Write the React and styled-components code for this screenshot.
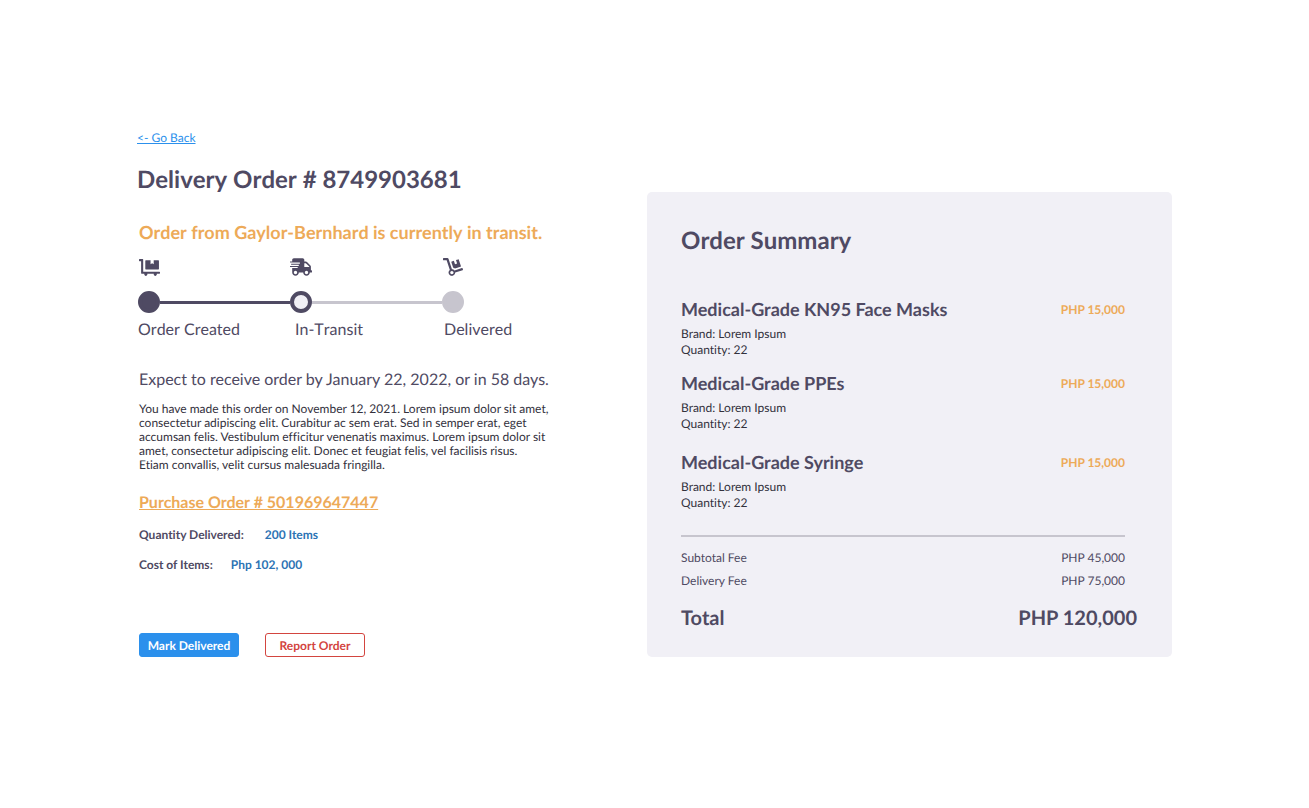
import React, { Fragment } from "react";
import styled, { createGlobalStyle } from "styled-components";
import { FaDolly, FaDollyFlatbed, FaShippingFast } from "react-icons/fa";

const ink = "#4f4a63";
const text = "#33313d";
const amber = "#edaa58";
const blue = "#2b90ec";
const deepBlue = "#2c73b4";
const red = "#d3453f";
const muted = "#c7c5ce";
const panel = "#f1f0f6";

const GlobalStyle = createGlobalStyle`
  *, *::before, *::after { box-sizing: border-box; }
  body {
    margin: 0;
    background: #fff;
    color: ${ink};
    font-family: Lato, "Liberation Sans", sans-serif;
    font-size: 12px;
    line-height: 16px;
    font-variant-ligatures: none;
    text-rendering: geometricPrecision;
  }
  h1, h2, h3, p, ul, ol, dl, dd { margin: 0; padding: 0; }
  h1, h2 { font-kerning: none; }
  ul, ol { list-style: none; }
`;

const Page = styled.main`
  display: grid;
  grid-template-columns: 34fr 35fr;
  align-items: end;
  padding: 130px 137px;
`;

const Order = styled.section`
  display: flex;
  flex-direction: column;
  align-items: flex-start;
`;

const BackLink = styled.a`
  color: ${blue};
`;

const Title = styled.h1`
  margin-top: 18px;
  font-size: 24px;
  line-height: 32px;
`;

const Details = styled.div`
  padding: 24px 0 0 2px;
`;

const Status = styled.h2`
  color: ${amber};
  font-size: 18px;
  line-height: 24px;
`;

const Steps = styled.ol`
  display: grid;
  grid-template-columns: 152px 152px auto;
  justify-content: start;
  margin: 13px 0 0 -1px;
`;

const Step = styled.li`
  display: flex;
  flex-direction: column;
`;

const StepIcon = styled.span`
  display: flex;
  align-items: center;
  height: 20px;
  padding-left: ${(p) => p.$inset}px;
  margin-bottom: 14px;
`;

const Track = styled.span`
  display: flex;
  align-items: center;
`;

const Dot = styled.span`
  width: 22px;
  height: 22px;
  border: 4px solid ${(p) => (p.$state === "todo" ? muted : ink)};
  border-radius: 50%;
  background: ${(p) => ({ done: ink, current: panel, todo: muted })[p.$state]};
`;

const Connector = styled.span`
  flex: 1;
  height: 3px;
  background: ${(p) => (p.$done ? ink : muted)};
`;

const StepLabel = styled.span`
  margin-top: 7px;
  padding-left: ${(p) => p.$inset}px;
  font-size: 16px;
  line-height: 20px;
  font-kerning: none;
`;

const Expected = styled.p`
  margin-top: 30px;
  font-size: 16px;
  line-height: 20px;
`;

const Note = styled.p`
  margin-top: 12px;
  color: ${text};
  line-height: 14px;
`;

const PurchaseLink = styled.a`
  display: inline-block;
  margin-top: 21px;
  color: ${amber};
  font-size: 16px;
  font-weight: 700;
  line-height: 20px;
`;

const Facts = styled.dl`
  display: flex;
  flex-direction: column;
  gap: 14px;
  margin-top: 14px;
  font-weight: 700;
`;

const Fact = styled.div`
  display: flex;
  gap: ${(p) => p.$gap}px;

  dd { color: ${deepBlue}; }
`;

const Actions = styled.div`
  display: flex;
  gap: 26px;
  margin-top: 60px;
`;

const Button = styled.button`
  width: 100px;
  height: 24px;
  padding: 1px 0 0;
  border: 1px solid ${(p) => (p.$primary ? blue : red)};
  border-radius: 3px;
  background: ${(p) => (p.$primary ? blue : "#fff")};
  color: ${(p) => (p.$primary ? "#fff" : red)};
  font: inherit;
  font-weight: 700;
  text-rendering: inherit;
  cursor: pointer;
`;

const Summary = styled.section`
  padding: 33px 47px 27px 34px;
  border-radius: 5px;
  background: ${panel};
`;

const SummaryTitle = styled.h2`
  font-size: 24px;
  line-height: 32px;
`;

const Items = styled.ul`
  display: flex;
  flex-direction: column;
  gap: 13px;
  margin-top: 40px;
  padding-bottom: 24px;
  border-bottom: 2px solid ${muted};
`;

const Item = styled.li`
  color: ${text};

  &:last-child { padding-top: 5px; }
`;

const ItemHead = styled.div`
  display: flex;
  align-items: center;
  justify-content: space-between;
  margin-bottom: 5px;
`;

const ItemName = styled.h3`
  color: ${ink};
  font-size: 18px;
  line-height: 24px;
`;

const Price = styled.span`
  padding-top: 2px;
  color: ${amber};
  font-weight: 700;
`;

const Fees = styled.dl`
  display: flex;
  flex-direction: column;
  gap: 7px;
  margin-top: 13px;
`;

const Fee = styled.div`
  display: flex;
  justify-content: space-between;
`;

const Total = styled(Fee)`
  margin: 10px -12px 0 0;
  font-size: 20px;
  font-weight: 700;
  line-height: 24px;
`;

const steps = [
  { label: "Order Created", state: "done", Icon: FaDollyFlatbed, size: 21, iconInset: 1, inset: 0 },
  { label: "In-Transit", state: "current", Icon: FaShippingFast, size: 22, iconInset: 0, inset: 5 },
  { label: "Delivered", state: "todo", Icon: FaDolly, size: 20, iconInset: 1, inset: 2 },
];

const noteLines = [
  "You have made this order on November 12, 2021. Lorem ipsum dolor sit amet,",
  "consectetur adipiscing elit. Curabitur ac sem erat. Sed in semper erat, eget",
  "accumsan felis. Vestibulum efficitur venenatis maximus. Lorem ipsum dolor sit",
  "amet, consectetur adipiscing elit. Donec et feugiat felis, vel facilisis risus.",
  "Etiam convallis, velit cursus malesuada fringilla.",
];

const items = [
  "Medical-Grade KN95 Face Masks",
  "Medical-Grade PPEs",
  "Medical-Grade Syringe",
];

export default function App() {
  return (
    <>
      <GlobalStyle />
      <Page>
        <Order>
          <BackLink href="#back">&lt;- Go Back</BackLink>
          <Title>Delivery Order # 8749903681</Title>
          <Details>
            <Status>Order from Gaylor-Bernhard is currently in transit.</Status>
            <Steps>
              {steps.map(({ label, state, Icon, size, iconInset, inset }, i) => (
                <Step key={label}>
                  <StepIcon $inset={iconInset}>
                    <Icon size={size} aria-hidden="true" />
                  </StepIcon>
                  <Track>
                    <Dot $state={state} />
                    {i < steps.length - 1 && <Connector $done={state === "done"} />}
                  </Track>
                  <StepLabel $inset={inset}>{label}</StepLabel>
                </Step>
              ))}
            </Steps>
            <Expected>Expect to receive order by January 22, 2022, or in 58 days.</Expected>
            <Note>
              {noteLines.map((line, i) => (
                <Fragment key={line}>
                  {i > 0 && <br />}
                  {line}
                </Fragment>
              ))}
            </Note>
            <PurchaseLink href="#purchase-order">Purchase Order # 501969647447</PurchaseLink>
            <Facts>
              <Fact $gap={21}>
                <dt>Quantity Delivered:</dt>
                <dd>200 Items</dd>
              </Fact>
              <Fact $gap={18}>
                <dt>Cost of Items:</dt>
                <dd>Php 102, 000</dd>
              </Fact>
            </Facts>
            <Actions>
              <Button type="button" $primary>Mark Delivered</Button>
              <Button type="button">Report Order</Button>
            </Actions>
          </Details>
        </Order>

        <Summary>
          <SummaryTitle>Order Summary</SummaryTitle>
          <Items>
            {items.map((name) => (
              <Item key={name}>
                <ItemHead>
                  <ItemName>{name}</ItemName>
                  <Price>PHP 15,000</Price>
                </ItemHead>
                <p>Brand: Lorem Ipsum</p>
                <p>Quantity: 22</p>
              </Item>
            ))}
          </Items>
          <Fees>
            <Fee>
              <dt>Subtotal Fee</dt>
              <dd>PHP 45,000</dd>
            </Fee>
            <Fee>
              <dt>Delivery Fee</dt>
              <dd>PHP 75,000</dd>
            </Fee>
            <Total>
              <dt>Total</dt>
              <dd>PHP 120,000</dd>
            </Total>
          </Fees>
        </Summary>
      </Page>
    </>
  );
}
